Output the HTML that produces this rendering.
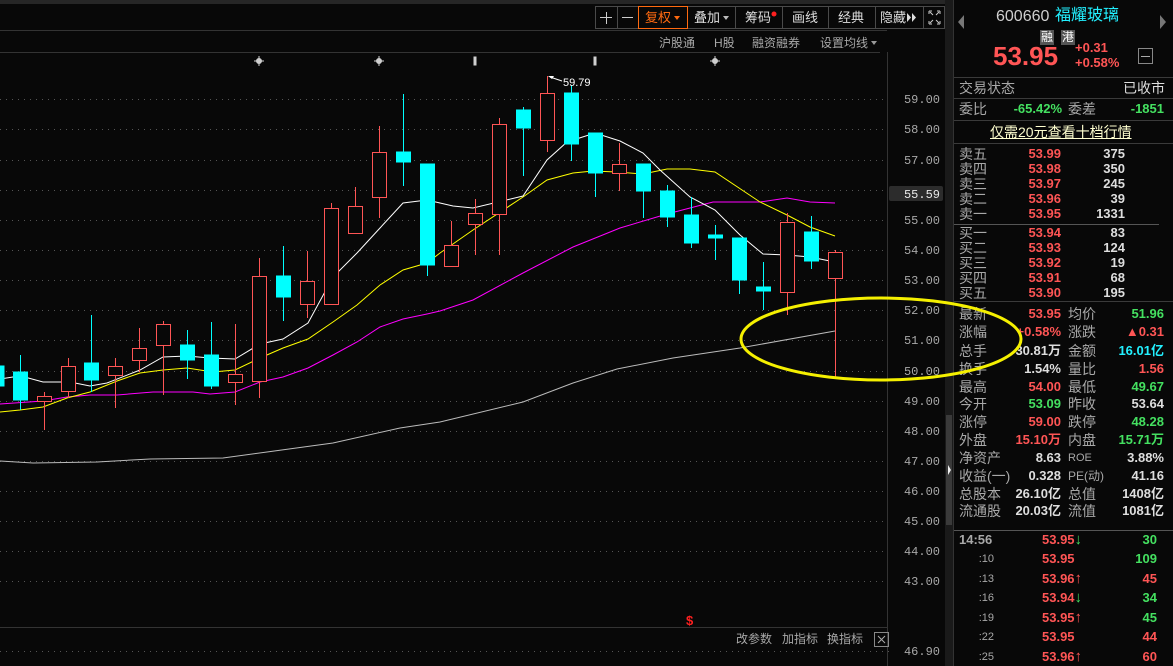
<!DOCTYPE html>
<html><head><meta charset="utf-8"><style>
*{margin:0;padding:0;box-sizing:border-box}
body{width:1173px;height:666px;background:#080808;overflow:hidden;position:relative;font-family:"Liberation Sans","Noto Sans CJK SC",sans-serif;}
.t{position:absolute;line-height:16px;height:16px;font-size:13px;white-space:nowrap}
.r{text-align:right}
.g{color:#a8a8a8;font-size:14px}.red{color:#ff5555}.grn{color:#44e060}.wh{color:#dedede}.cy{color:#22f0ff}
.b{font-weight:bold}
.hl{position:absolute;height:1px;background:#3a3a3a}
.ar{font-weight:bold;font-size:15px}
</style></head><body>
<svg width="1173" height="666" style="position:absolute;left:0;top:0">
<rect x="0" y="0" width="945" height="4" fill="#262626"/>
<line x1="0" y1="30.5" x2="887" y2="30.5" stroke="#333"/>
<line x1="0" y1="52.5" x2="880" y2="52.5" stroke="#333"/>
<line x1="0" y1="627.5" x2="887" y2="627.5" stroke="#333"/>
<line x1="887.5" y1="52" x2="887.5" y2="666" stroke="#333"/>
<rect x="945" y="0" width="8" height="666" fill="#1a1a1a"/>
<rect x="946" y="415" width="6" height="110" fill="#3a3a3a"/>
<polygon points="948,465 951,470 948,475" fill="#eee"/>
<line x1="953.5" y1="0" x2="953.5" y2="666" stroke="#333"/>
<g stroke="#555" stroke-dasharray="1,5">
<line x1="0" y1="99.5" x2="885" y2="99.5"/><line x1="0" y1="129.5" x2="885" y2="129.5"/><line x1="0" y1="160.5" x2="885" y2="160.5"/><line x1="0" y1="190.5" x2="885" y2="190.5"/><line x1="0" y1="220.5" x2="885" y2="220.5"/><line x1="0" y1="250.5" x2="885" y2="250.5"/><line x1="0" y1="280.5" x2="885" y2="280.5"/><line x1="0" y1="310.5" x2="885" y2="310.5"/><line x1="0" y1="340.5" x2="885" y2="340.5"/><line x1="0" y1="371.5" x2="885" y2="371.5"/><line x1="0" y1="401.5" x2="885" y2="401.5"/><line x1="0" y1="431.5" x2="885" y2="431.5"/><line x1="0" y1="461.5" x2="885" y2="461.5"/><line x1="0" y1="491.5" x2="885" y2="491.5"/><line x1="0" y1="521.5" x2="885" y2="521.5"/><line x1="0" y1="551.5" x2="885" y2="551.5"/><line x1="0" y1="581.5" x2="885" y2="581.5"/><line x1="0" y1="651.5" x2="890" y2="651.5"/>
</g>
<g font-family="Liberation Mono, monospace" font-size="12" fill="#a8a8a8" text-anchor="end">
<text x="940" y="103">59.00</text><text x="940" y="133">58.00</text><text x="940" y="164">57.00</text><text x="940" y="224">55.00</text><text x="940" y="254">54.00</text><text x="940" y="284">53.00</text><text x="940" y="314">52.00</text><text x="940" y="344">51.00</text><text x="940" y="375">50.00</text><text x="940" y="405">49.00</text><text x="940" y="435">48.00</text><text x="940" y="465">47.00</text><text x="940" y="495">46.00</text><text x="940" y="525">45.00</text><text x="940" y="555">44.00</text><text x="940" y="585">43.00</text><text x="940" y="655">46.90</text>
</g>
<rect x="889" y="186" width="54" height="15" rx="2" fill="#2c2c2c"/>
<text x="940" y="198" font-family="Liberation Mono, monospace" font-size="12" fill="#e8e8e8" text-anchor="end">55.59</text>
<g fill="none" stroke-width="1">
<polyline stroke="#bbbbbb" points="0,461 33,463 97,462 150,459 223,458 267,452 333,443 400,428 440,422 523,402 573,383 617,369 673,358 740,348 835,331"/>
<polyline stroke="#ff00ff" points="0,404 43,401 67,397 90,395 117,395 153,392 193,392 210,394 235,392 260,382 283,377 308,368 333,355 357,342 380,327 403,319 427,314 440,311 473,300 523,273 573,247 620,228 667,214 713,202 760,202 787,198 810,202 835,203"/>
<polyline stroke="#ffff00" points="0,412 20,410 43,407 67,398 90,392 117,381 140,373 163,370 187,368 213,372 235,370 260,358 283,348 308,339 333,322 357,305 380,285 403,270 427,263 440,253 473,230 523,197 547,180 573,173 593,171 617,172 643,174 667,169 690,169 715,172 760,202 787,215 810,227 835,236"/>
<polyline stroke="#ffffff" points="0,379 13,377 21,376 43,382 70,382 90,386 107,383 140,370 163,357 187,356 210,358 235,359 260,344 283,339 308,323 333,277 357,253 380,228 403,203 427,200 440,203 453,206 473,208 523,196 547,160 567,142 595,133 620,141 643,153 660,170 690,197 715,210 740,235 763,254 787,255 810,257 835,262"/>
</g>
<g stroke-width="1">
<g stroke="#00ffff" fill="#00ffff">
<rect x="-10" y="366" width="14" height="20"/>
<line x1="20.5" y1="355" x2="20.5" y2="410"/><rect x="13.5" y="372" width="14" height="28"/>
<line x1="91.5" y1="315" x2="91.5" y2="392"/><rect x="84.5" y="363" width="14" height="17"/>
<line x1="187.5" y1="330" x2="187.5" y2="379"/><rect x="180.5" y="345" width="14" height="15"/>
<line x1="211.5" y1="322" x2="211.5" y2="389"/><rect x="204.5" y="355" width="14" height="31"/>
<line x1="283.5" y1="246" x2="283.5" y2="321"/><rect x="276.5" y="276" width="14" height="21"/>
<line x1="403.5" y1="94" x2="403.5" y2="186"/><rect x="396.5" y="152" width="14" height="10"/>
<line x1="427.5" y1="164" x2="427.5" y2="276"/><rect x="420.5" y="164" width="14" height="101"/>
<line x1="523.5" y1="107" x2="523.5" y2="176"/><rect x="516.5" y="110" width="14" height="18"/>
<line x1="571.5" y1="85" x2="571.5" y2="161"/><rect x="564.5" y="93" width="14" height="51"/>
<line x1="595.5" y1="133" x2="595.5" y2="197"/><rect x="588.5" y="133" width="14" height="40"/>
<line x1="643.5" y1="164" x2="643.5" y2="218"/><rect x="636.5" y="164" width="14" height="27"/>
<line x1="667.5" y1="185" x2="667.5" y2="227"/><rect x="660.5" y="191" width="14" height="26"/>
<line x1="691.5" y1="197" x2="691.5" y2="248"/><rect x="684.5" y="215" width="14" height="28"/>
<line x1="715.5" y1="225" x2="715.5" y2="260"/><rect x="708.5" y="235" width="14" height="3"/>
<line x1="739.5" y1="238" x2="739.5" y2="294"/><rect x="732.5" y="238" width="14" height="42"/>
<line x1="763.5" y1="262" x2="763.5" y2="310"/><rect x="756.5" y="287" width="14" height="4"/>
<line x1="811.5" y1="216" x2="811.5" y2="269"/><rect x="804.5" y="232" width="14" height="29"/>
</g>
<g stroke="#ff5555" fill="#080808">
<line x1="44.5" y1="392" x2="44.5" y2="430"/><rect x="37.5" y="396.5" width="14" height="5"/>
<line x1="68.5" y1="358" x2="68.5" y2="398"/><rect x="61.5" y="366.5" width="14" height="25"/>
<line x1="115.5" y1="358" x2="115.5" y2="408"/><rect x="108.5" y="366.5" width="14" height="9"/>
<line x1="139.5" y1="328" x2="139.5" y2="372"/><rect x="132.5" y="348.5" width="14" height="12"/>
<line x1="163.5" y1="321" x2="163.5" y2="395"/><rect x="156.5" y="324.5" width="14" height="21"/>
<line x1="235.5" y1="324" x2="235.5" y2="405"/><rect x="228.5" y="374.5" width="14" height="8"/>
<line x1="259.5" y1="258" x2="259.5" y2="398"/><rect x="252.5" y="276.5" width="14" height="105"/>
<line x1="307.5" y1="251" x2="307.5" y2="318"/><rect x="300.5" y="281.5" width="14" height="23"/>
<line x1="331.5" y1="203" x2="331.5" y2="304"/><rect x="324.5" y="208.5" width="14" height="96"/>
<line x1="355.5" y1="187" x2="355.5" y2="233"/><rect x="348.5" y="206.5" width="14" height="27"/>
<line x1="379.5" y1="126" x2="379.5" y2="218"/><rect x="372.5" y="152.5" width="14" height="45"/>
<line x1="451.5" y1="221" x2="451.5" y2="266"/><rect x="444.5" y="245.5" width="14" height="21"/>
<line x1="475.5" y1="199" x2="475.5" y2="255"/><rect x="468.5" y="213.5" width="14" height="11"/>
<line x1="499.5" y1="118" x2="499.5" y2="255"/><rect x="492.5" y="124.5" width="14" height="90"/>
<line x1="547.5" y1="76" x2="547.5" y2="152"/><rect x="540.5" y="93.5" width="14" height="47"/>
<line x1="619.5" y1="143" x2="619.5" y2="191"/><rect x="612.5" y="164.5" width="14" height="9"/>
<line x1="787.5" y1="213" x2="787.5" y2="315"/><rect x="780.5" y="222.5" width="14" height="70"/>
<line x1="835.5" y1="250" x2="835.5" y2="378"/><rect x="828.5" y="252.5" width="14" height="26"/>
</g>
</g>
<line x1="550" y1="77" x2="562" y2="81" stroke="#fff"/>
<polygon points="548,76 554,76 552,79" fill="#fff"/>
<text x="563" y="86" font-family="Liberation Sans,sans-serif" font-size="11" fill="#fff">59.79</text>
<g fill="#cfcfcf" stroke="#cfcfcf">
<circle cx="259" cy="61" r="2.5"/><line x1="254" y1="61" x2="264" y2="61"/><line x1="259" y1="56" x2="259" y2="66"/>
<circle cx="379" cy="61" r="2.5"/><line x1="374" y1="61" x2="384" y2="61"/><line x1="379" y1="56" x2="379" y2="66"/>
<circle cx="715" cy="61" r="2.5"/><line x1="710" y1="61" x2="720" y2="61"/><line x1="715" y1="56" x2="715" y2="66"/>
<rect x="474" y="57" width="2" height="8"/><rect x="594" y="57" width="2" height="8"/>
</g>
<text x="686" y="625" font-family="Liberation Sans,sans-serif" font-size="13" font-weight="bold" fill="#ff2020">$</text>
<rect x="595.5" y="6.5" width="349" height="22" fill="#080808" stroke="#4a4a4a"/>
<g stroke="#4a4a4a"><line x1="617.5" y1="6" x2="617.5" y2="28"/><line x1="638.5" y1="6" x2="638.5" y2="28"/><line x1="687.5" y1="6" x2="687.5" y2="28"/><line x1="735.5" y1="6" x2="735.5" y2="28"/><line x1="782.5" y1="6" x2="782.5" y2="28"/><line x1="828.5" y1="6" x2="828.5" y2="28"/><line x1="875.5" y1="6" x2="875.5" y2="28"/><line x1="923.5" y1="6" x2="923.5" y2="28"/></g>
<rect x="638.5" y="6.5" width="49" height="22" fill="none" stroke="#ff6a10"/>
<g stroke="#ccc"><line x1="600" y1="17.5" x2="612" y2="17.5"/><line x1="606.5" y1="12" x2="606.5" y2="24"/><line x1="622" y1="17.5" x2="633" y2="17.5"/>
<path d="M929 11h3M929 11v3M940 11h-3M940 11v3M929 24h3M929 24v-3M940 24h-3M940 24v-3M930 12l3 3M939 12l-3 3M930 23l3-3M939 23l-3-3" fill="none"/></g>
<polygon points="674,16 680,16 677,20" fill="#ff6a10"/>
<polygon points="723,16 729,16 726,20" fill="#bbb"/>
<circle cx="774" cy="14" r="2.5" fill="#ff2020"/>
<polygon points="907,13 911,17.5 907,22" fill="#ddd"/><polygon points="912,13 916,17.5 912,22" fill="#ddd"/>
<polygon points="871,41 877,41 874,45" fill="#999"/>
<rect x="874.5" y="632.5" width="14" height="14" fill="none" stroke="#888"/>
<path d="M878 636l7 7M885 636l-7 7" stroke="#aaa"/>
<polygon points="964,15 958,22 964,29" fill="#777"/><polygon points="1160,15 1166,22 1160,29" fill="#777"/>
<rect x="1138.5" y="48.5" width="14" height="15" fill="none" stroke="#888"/><line x1="1141" y1="56.5" x2="1150" y2="56.5" stroke="#aaa"/>
</svg>

<div class="t wh" style="left:645px;top:10px;color:#ff6a10">复权</div>
<div class="t wh" style="left:694px;top:10px">叠加</div>
<div class="t wh" style="left:745px;top:10px">筹码</div>
<div class="t wh" style="left:792px;top:10px">画线</div>
<div class="t wh" style="left:838px;top:10px">经典</div>
<div class="t wh" style="left:880px;top:10px">隐藏</div>
<div class="t" style="color:#a8a8a8;left:659px;top:35px;font-size:12px">沪股通</div>
<div class="t" style="color:#a8a8a8;left:714px;top:35px;font-size:12px">H股</div>
<div class="t" style="color:#a8a8a8;left:752px;top:35px;font-size:12px">融资融券</div>
<div class="t" style="color:#a8a8a8;left:820px;top:35px;font-size:12px">设置均线</div>
<div class="t" style="color:#a8a8a8;left:736px;top:631px;font-size:12px">改参数</div>
<div class="t" style="color:#a8a8a8;left:782px;top:631px;font-size:12px">加指标</div>
<div class="t" style="color:#a8a8a8;left:827px;top:631px;font-size:12px">换指标</div>

<div class="t" style="left:996px;top:8px;font-size:16px;height:18px;line-height:18px;color:#cfcfcf">600660</div>
<div class="t cy" style="left:1055px;top:7px;font-size:16px;height:18px;line-height:18px">福耀玻璃</div>
<div class="t" style="left:1040px;top:30px;width:14px;height:15px;line-height:15px;background:#555;color:#fff;font-size:12px;text-align:center">融</div>
<div class="t" style="left:1061px;top:30px;width:14px;height:15px;line-height:15px;background:#555;color:#fff;font-size:12px;text-align:center">港</div>
<div class="t red b" style="left:993px;top:41px;font-size:26px;height:30px;line-height:30px">53.95</div>
<div class="t red b" style="left:1075px;top:40px">+0.31</div>
<div class="t red b" style="left:1075px;top:55px">+0.58%</div>
<div class="hl" style="left:954px;top:77px;width:219px"></div>
<div class="t g" style="left:959px;top:80px">交易状态</div><div class="t wh r" style="left:1100px;top:80px;width:65px;font-size:14px">已收市</div>
<div class="hl" style="left:954px;top:98px;width:219px"></div>
<div class="t g" style="left:959px;top:101px">委比</div><div class="t grn b r" style="left:1000px;top:101px;width:62px">-65.42%</div>
<div class="t g" style="left:1068px;top:101px">委差</div><div class="t grn b r" style="left:1110px;top:101px;width:54px">-1851</div>
<div class="hl" style="left:954px;top:120px;width:219px"></div>
<div class="t" style="left:990px;top:124px;color:#ffffd0;text-decoration:underline;font-size:14px">仅需20元查看十档行情</div>
<div class="hl" style="left:954px;top:143px;width:219px"></div>

<div class="t g" style="left:959px;top:146px">卖五</div><div class="t red b r" style="left:1000px;top:146px;width:61px">53.99</div><div class="t wh b r" style="left:1070px;top:146px;width:55px">375</div>
<div class="t g" style="left:959px;top:161px">卖四</div><div class="t red b r" style="left:1000px;top:161px;width:61px">53.98</div><div class="t wh b r" style="left:1070px;top:161px;width:55px">350</div>
<div class="t g" style="left:959px;top:176px">卖三</div><div class="t red b r" style="left:1000px;top:176px;width:61px">53.97</div><div class="t wh b r" style="left:1070px;top:176px;width:55px">245</div>
<div class="t g" style="left:959px;top:191px">卖二</div><div class="t red b r" style="left:1000px;top:191px;width:61px">53.96</div><div class="t wh b r" style="left:1070px;top:191px;width:55px">39</div>
<div class="t g" style="left:959px;top:206px">卖一</div><div class="t red b r" style="left:1000px;top:206px;width:61px">53.95</div><div class="t wh b r" style="left:1070px;top:206px;width:55px">1331</div>
<div class="hl" style="left:954px;top:224px;width:205px;background:#555"></div>
<div class="t g" style="left:959px;top:225px">买一</div><div class="t red b r" style="left:1000px;top:225px;width:61px">53.94</div><div class="t wh b r" style="left:1070px;top:225px;width:55px">83</div>
<div class="t g" style="left:959px;top:240px">买二</div><div class="t red b r" style="left:1000px;top:240px;width:61px">53.93</div><div class="t wh b r" style="left:1070px;top:240px;width:55px">124</div>
<div class="t g" style="left:959px;top:255px">买三</div><div class="t red b r" style="left:1000px;top:255px;width:61px">53.92</div><div class="t wh b r" style="left:1070px;top:255px;width:55px">19</div>
<div class="t g" style="left:959px;top:270px">买四</div><div class="t red b r" style="left:1000px;top:270px;width:61px">53.91</div><div class="t wh b r" style="left:1070px;top:270px;width:55px">68</div>
<div class="t g" style="left:959px;top:285px">买五</div><div class="t red b r" style="left:1000px;top:285px;width:61px">53.90</div><div class="t wh b r" style="left:1070px;top:285px;width:55px">195</div>
<div class="hl" style="left:954px;top:301px;width:219px"></div>

<div class="t g" style="left:959px;top:306px">最新</div><div class="t red b r" style="left:995px;top:306px;width:66px">53.95</div><div class="t g" style="left:1068px;top:306px">均价</div><div class="t grn b r" style="left:1100px;top:306px;width:64px">51.96</div>
<div class="t g" style="left:959px;top:324px">涨幅</div><div class="t red b r" style="left:995px;top:324px;width:66px">+0.58%</div><div class="t g" style="left:1068px;top:324px">涨跌</div><div class="t red b r" style="left:1100px;top:324px;width:64px">▲0.31</div>
<div class="t g" style="left:959px;top:343px">总手</div><div class="t wh b r" style="left:995px;top:343px;width:66px">30.81万</div><div class="t g" style="left:1068px;top:343px">金额</div><div class="t cy b r" style="left:1100px;top:343px;width:64px">16.01亿</div>
<div class="t g" style="left:959px;top:361px">换手</div><div class="t wh b r" style="left:995px;top:361px;width:66px">1.54%</div><div class="t g" style="left:1068px;top:361px">量比</div><div class="t red b r" style="left:1100px;top:361px;width:64px">1.56</div>
<div class="t g" style="left:959px;top:379px">最高</div><div class="t red b r" style="left:995px;top:379px;width:66px">54.00</div><div class="t g" style="left:1068px;top:379px">最低</div><div class="t grn b r" style="left:1100px;top:379px;width:64px">49.67</div>
<div class="t g" style="left:959px;top:396px">今开</div><div class="t grn b r" style="left:995px;top:396px;width:66px">53.09</div><div class="t g" style="left:1068px;top:396px">昨收</div><div class="t wh b r" style="left:1100px;top:396px;width:64px">53.64</div>
<div class="t g" style="left:959px;top:414px">涨停</div><div class="t red b r" style="left:995px;top:414px;width:66px">59.00</div><div class="t g" style="left:1068px;top:414px">跌停</div><div class="t grn b r" style="left:1100px;top:414px;width:64px">48.28</div>
<div class="t g" style="left:959px;top:432px">外盘</div><div class="t red b r" style="left:995px;top:432px;width:66px">15.10万</div><div class="t g" style="left:1068px;top:432px">内盘</div><div class="t grn b r" style="left:1100px;top:432px;width:64px">15.71万</div>
<div class="t g" style="left:959px;top:450px">净资产</div><div class="t wh b r" style="left:995px;top:450px;width:66px">8.63</div><div class="t g" style="left:1068px;top:450px;font-size:11px">ROE</div><div class="t wh b r" style="left:1100px;top:450px;width:64px">3.88%</div>
<div class="t g" style="left:959px;top:468px">收益(一)</div><div class="t wh b r" style="left:995px;top:468px;width:66px">0.328</div><div class="t g" style="left:1068px;top:468px;font-size:12px">PE(动)</div><div class="t wh b r" style="left:1100px;top:468px;width:64px">41.16</div>
<div class="t g" style="left:959px;top:486px">总股本</div><div class="t wh b r" style="left:995px;top:486px;width:66px">26.10亿</div><div class="t g" style="left:1068px;top:486px">总值</div><div class="t wh b r" style="left:1100px;top:486px;width:64px">1408亿</div>
<div class="t g" style="left:959px;top:503px">流通股</div><div class="t wh b r" style="left:995px;top:503px;width:66px">20.03亿</div><div class="t g" style="left:1068px;top:503px">流值</div><div class="t wh b r" style="left:1100px;top:503px;width:64px">1081亿</div>
<div class="hl" style="left:954px;top:530px;width:219px;background:#555"></div>

<div class="t b" style="color:#a8a8a8;left:959px;top:532px">14:56</div><div class="t red b" style="left:1042px;top:532px">53.95<span class="grn ar">↓</span></div><div class="t grn b r" style="left:1110px;top:532px;width:47px">30</div>
<div class="t r" style="color:#a8a8a8;left:960px;top:551px;width:34px;font-size:11px">:10</div><div class="t red b" style="left:1042px;top:551px">53.95</div><div class="t grn b r" style="left:1110px;top:551px;width:47px">109</div>
<div class="t r" style="color:#a8a8a8;left:960px;top:571px;width:34px;font-size:11px">:13</div><div class="t red b" style="left:1042px;top:571px">53.96<span class="ar">↑</span></div><div class="t red b r" style="left:1110px;top:571px;width:47px">45</div>
<div class="t r" style="color:#a8a8a8;left:960px;top:590px;width:34px;font-size:11px">:16</div><div class="t red b" style="left:1042px;top:590px">53.94<span class="grn ar">↓</span></div><div class="t grn b r" style="left:1110px;top:590px;width:47px">34</div>
<div class="t r" style="color:#a8a8a8;left:960px;top:610px;width:34px;font-size:11px">:19</div><div class="t red b" style="left:1042px;top:610px">53.95<span class="ar">↑</span></div><div class="t grn b r" style="left:1110px;top:610px;width:47px">45</div>
<div class="t r" style="color:#a8a8a8;left:960px;top:629px;width:34px;font-size:11px">:22</div><div class="t red b" style="left:1042px;top:629px">53.95</div><div class="t red b r" style="left:1110px;top:629px;width:47px">44</div>
<div class="t r" style="color:#a8a8a8;left:960px;top:649px;width:34px;font-size:11px">:25</div><div class="t red b" style="left:1042px;top:649px">53.96<span class="ar">↑</span></div><div class="t red b r" style="left:1110px;top:649px;width:47px">60</div>

<svg width="1173" height="666" style="position:absolute;left:0;top:0;pointer-events:none">
<ellipse cx="881" cy="339" rx="140" ry="41" fill="none" stroke="#f5f000" stroke-width="3"/>
</svg>
</body></html>
